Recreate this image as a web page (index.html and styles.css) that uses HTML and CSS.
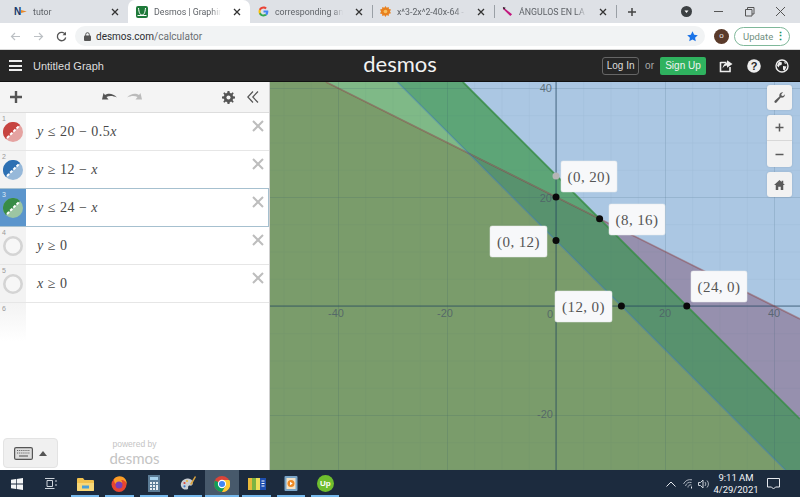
FILE: index.html
```html
<!DOCTYPE html>
<html lang="en">
<head>
<meta charset="utf-8">
<title>Desmos | Graphing Calculator</title>
<link rel="stylesheet" href="styles.css">
</head>
<body>
<div class="page">
  <div class="tabstrip">
    <div class="tab">
      <span class="fav nlogo">N<svg width="6" height="5" viewBox="0 0 6 5"><path d="M0 1 L6 2.500 L0 4z" fill="#e8892c"/></svg></span>
      <span class="tab-title">tutor</span><svg class="tab-x" viewBox="0 0 8 8"><path d="M1 1l6 6M7 1l-6 6"/></svg>
    </div>
    <div class="tab tab-active">
      <svg class="fav" width="12" height="12" viewBox="0 0 12 12"><rect width="12" height="12" rx="2" fill="#1f7a3a"/><path d="M2.500 2 C3 7 4 9 6 9 C8 9 9 7 9.500 2 M1.500 9.500 H10.500" stroke="#fff" stroke-width="1" fill="none"/></svg>
      <span class="tab-title">Desmos | Graphing C</span><svg class="tab-x" viewBox="0 0 8 8"><path d="M1 1l6 6M7 1l-6 6"/></svg>
    </div>
    <div class="tab tab-sep">
      <svg class="fav" width="11" height="11" viewBox="0 0 24 24"><path d="M22.500 12.300c0-.8-.1-1.500-.2-2.300H12v4.400h5.900c-.3 1.400-1 2.500-2.200 3.300l3.500 2.700c2.100-1.900 3.300-4.800 3.300-8.100z" fill="#4285f4"/><path d="M12 23c3 0 5.400-1 7.200-2.600l-3.500-2.700c-1 .7-2.200 1-3.700 1-2.800 0-5.200-1.900-6.100-4.500H2.300v2.800C4.100 20.600 7.800 23 12 23z" fill="#34a853"/><path d="M5.900 14.200c-.5-1.400-.5-3 0-4.400V7H2.300c-1.500 3-1.500 7 0 10z" fill="#fbbc05"/><path d="M12 5.400c1.600 0 3 .5 4.100 1.600l3.100-3.100C17.400 2.100 15 1 12 1 7.800 1 4.100 3.400 2.300 7l3.600 2.800C6.800 7.300 9.200 5.400 12 5.400z" fill="#ea4335"/></svg>
      <span class="tab-title">corresponding angle</span><svg class="tab-x" viewBox="0 0 8 8"><path d="M1 1l6 6M7 1l-6 6"/></svg>
    </div>
    <div class="tab tab-sep">
      <svg class="fav" width="11" height="11" viewBox="0 0 12 12"><path d="M6 0l1.300 2 2.200-1 .2 2.400 2.300.4-1.100 2.200 1.100 2-2.300.5-.2 2.400-2.200-1L6 12l-1.300-2-2.200 1-.2-2.400L0 8.100l1.100-2.100L0 3.800l2.300-.4.2-2.400 2.200 1z" fill="#e8801e"/><circle cx="6" cy="6" r="2" fill="#f8c060"/></svg>
      <span class="tab-title">x^3-2x^2-40x-64 - W</span><svg class="tab-x" viewBox="0 0 8 8"><path d="M1 1l6 6M7 1l-6 6"/></svg>
    </div>
    <div class="tab tab-sep">
      <svg class="fav" width="11" height="11" viewBox="0 0 12 12"><path d="M1 1 L11 9 L9 11 L1 3z" fill="#c2187e"/><path d="M1 1 L4 2 L2 4z" fill="#222"/></svg>
      <span class="tab-title">ÁNGULOS EN LA CIR</span><svg class="tab-x" viewBox="0 0 8 8"><path d="M1 1l6 6M7 1l-6 6"/></svg>
    </div>
    <div class="tab-new"><svg width="10" height="10" viewBox="0 0 10 10"><path d="M5 1v8M1 5h8" stroke="#444" stroke-width="1.500"/></svg></div>
    <div class="window-controls">
      <svg class="media" width="11" height="11" viewBox="0 0 11 11"><circle cx="5.500" cy="5.500" r="5.500" fill="#3c4043"/><path d="M3.500 4.500h4L5.500 7z" fill="#fff"/></svg>
      <svg width="11" height="11" viewBox="0 0 11 11"><path d="M1 5.500h9" stroke="#555"/></svg>
      <svg width="11" height="11" viewBox="0 0 11 11"><path d="M1.500 3.500h6.500v6.500h-6.500z M3.500 3.500v-2h6.500v6.500h-2" stroke="#555" fill="none"/></svg>
      <svg width="11" height="11" viewBox="0 0 11 11"><path d="M1 1l9 9M10 1l-9 9" stroke="#555"/></svg>
    </div>
  </div>

  <div class="addressbar">
    <svg class="nav-icon nav-back" width="11" height="11" viewBox="0 0 11 11"><path d="M10 5.500H1.500M5 2L1.500 5.500 5 9" stroke="#bcc0c4" stroke-width="1.200" fill="none"/></svg>
    <svg class="nav-icon" width="11" height="11" viewBox="0 0 11 11"><path d="M1 5.500h8.500M6 2l3.500 3.500L6 9" stroke="#bcc0c4" stroke-width="1.200" fill="none"/></svg>
    <svg class="nav-icon" width="11" height="11" viewBox="0 0 11 11"><path d="M9.300 3.500A4.200 4.200 0 1 0 9.700 6.500" stroke="#555" stroke-width="1.300" fill="none"/><path d="M10 .8v3.500H6.500z" fill="#555"/></svg>
    <div class="omnibox">
      <svg width="7" height="9" viewBox="0 0 7 9"><rect y="3.500" width="7" height="5.500" rx="1" fill="#555"/><path d="M1.700 4V2.500a1.800 1.800 0 0 1 3.600 0V4" stroke="#555" fill="none"/></svg>
      <span class="url"><span class="url-host">desmos.com</span>/calculator</span>
      <svg class="star" width="11" height="11" viewBox="0 0 12 12"><path d="M6 .3l1.800 3.700 4 .5-3 2.800.8 4L6 9.300 2.400 11.300l.8-4-3-2.800 4-.5z" fill="#1a73e8"/></svg>
    </div>
    <span class="avatar">o</span>
    <span class="update">Update<span class="update-dots">⋮</span></span>
  </div>

  <header class="appbar">
    <div class="appbar-left">
      <span class="hamburger"><i></i><i></i><i></i></span>
      <span class="graph-title">Untitled Graph</span>
    </div>
    <div class="logo">desmos</div>
    <div class="appbar-right">
      <span class="btn-login">Log In</span>
      <span class="or">or</span>
      <span class="btn-signup">Sign Up</span>
      <svg class="bar-icon" width="14" height="14" viewBox="0 0 14 14"><path d="M1.500 3.500h6M1.500 3v9.500h9.500V8" stroke="#eee" stroke-width="1.600" fill="none"/><path d="M8 1.200l5.500 3.800L8 8.800V6.500C6 6.500 4.500 7.500 3.500 9.500 3.700 6.500 5.500 4 8 3.700z" fill="#eee"/></svg>
      <svg class="bar-icon" width="14" height="14" viewBox="0 0 14 14"><circle cx="7" cy="7" r="6.800" fill="#eee"/><text x="7" y="10.800" class="q-mark">?</text></svg>
      <svg class="bar-icon" width="14" height="14" viewBox="0 0 14 14"><circle cx="7" cy="7" r="6" stroke="#eee" stroke-width="1.400" fill="none"/><path d="M4 2.500l3 1-.5 2.500-2 .5-1 2L2 6.500zM8 7l3.500.5L9.500 12 8 10.500z M9 2.500l2.500 1.500-1.500 1z" fill="#eee"/></svg>
    </div>
  </header>

  <main class="workspace">
    <aside class="panel">
      <div class="toolbar">
        <svg class="tool-plus" width="12" height="12" viewBox="0 0 12 12"><path d="M6 0v12M0 6h12" stroke="#555" stroke-width="2.400"/></svg>
        <div class="undo-redo">
          <svg width="15" height="10" viewBox="0 0 15 10"><path d="M0 7.500L1.500 1l1.500 2C6 1 11 1 15 5.500 11 3.500 7 3.500 4.500 5L6.500 7.500z" fill="#555"/></svg>
          <svg width="15" height="10" viewBox="0 0 15 10"><path d="M15 7.500L13.500 1 12 3C9 1 4 1 0 5.500 4 3.500 8 3.500 10.500 5L8.500 7.500z" fill="#bbb"/></svg>
        </div>
        <div class="tool-right">
          <svg width="13" height="13" viewBox="0 0 14 14"><path d="M6 0h2l.4 2 1.400.6L11.500 1.400l1.100 1.100-1.200 1.700.6 1.400 2 .4v2l-2 .4-.6 1.400 1.200 1.700-1.100 1.100-1.700-1.200-1.400.6L8 14H6l-.4-2-1.400-.6-1.700 1.200-1.100-1.100 1.200-1.700-.6-1.400L0 8V6l2-.4.600-1.400L1.400 2.500 2.500 1.400l1.700 1.200L5.600 2z" fill="#555"/><circle cx="7" cy="7" r="2.200" fill="#f5f5f5"/></svg>
          <svg width="12" height="12" viewBox="0 0 12 12"><path d="M6 .5L.8 6 6 11.500M11 .5L5.800 6 11 11.500" stroke="#555" stroke-width="1.200" fill="none"/></svg>
        </div>
      </div>

      <div class="expr-list">
        <div class="expr">
          <div class="gutter"><span class="num">1</span><svg class="swatch" viewBox="0 0 20 20"><circle cx="10" cy="10" r="10" fill="#e5a3a1"/><path d="M17.100 2.900A10 10 0 0 0 2.900 17.100z" fill="#c74440"/><path d="M4 16L16 4" stroke="#fff" stroke-width="2" stroke-dasharray="3 1.500"/></svg></div>
          <div class="math"><i>y</i> ≤ 20 − 0.5<i>x</i></div><svg class="del" viewBox="0 0 12 12"><path d="M1 1l10 10M11 1L1 11"/></svg>
        </div>
        <div class="expr">
          <div class="gutter"><span class="num">2</span><svg class="swatch" viewBox="0 0 20 20"><circle cx="10" cy="10" r="10" fill="#96b8d9"/><path d="M17.100 2.900A10 10 0 0 0 2.900 17.100z" fill="#2d70b3"/><path d="M4 16L16 4" stroke="#fff" stroke-width="2" stroke-dasharray="3 1.500"/></svg></div>
          <div class="math"><i>y</i> ≥ 12 − <i>x</i></div><svg class="del" viewBox="0 0 12 12"><path d="M1 1l10 10M11 1L1 11"/></svg>
        </div>
        <div class="expr expr-active">
          <div class="gutter"><span class="num">3</span><svg class="swatch" viewBox="0 0 20 20"><circle cx="10" cy="10" r="10" fill="#9cc6a3"/><path d="M17.100 2.900A10 10 0 0 0 2.900 17.100z" fill="#388c46"/><path d="M4 16L16 4" stroke="#fff" stroke-width="2" stroke-dasharray="3 1.500"/></svg></div>
          <div class="math"><i>y</i> ≤ 24 − <i>x</i></div><svg class="del" viewBox="0 0 12 12"><path d="M1 1l10 10M11 1L1 11"/></svg>
        </div>
        <div class="expr">
          <div class="gutter"><span class="num">4</span><svg class="swatch" viewBox="0 0 20 20"><circle cx="10" cy="10" r="8.700" fill="#f7f7f7" stroke="#d4d4d4" stroke-width="2.600"/></svg></div>
          <div class="math"><i>y</i> ≥ 0</div><svg class="del" viewBox="0 0 12 12"><path d="M1 1l10 10M11 1L1 11"/></svg>
        </div>
        <div class="expr">
          <div class="gutter"><span class="num">5</span><svg class="swatch" viewBox="0 0 20 20"><circle cx="10" cy="10" r="8.700" fill="#f7f7f7" stroke="#d4d4d4" stroke-width="2.600"/></svg></div>
          <div class="math"><i>x</i> ≥ 0</div><svg class="del" viewBox="0 0 12 12"><path d="M1 1l10 10M11 1L1 11"/></svg>
        </div>
        <div class="expr expr-empty">
          <div class="gutter"><span class="num">6</span></div>
        </div>
      </div>

      <div class="panel-footer">
        <div class="keyboard-btn">
          <svg width="19" height="13" viewBox="0 0 19 13"><rect x=".6" y=".6" width="17.800" height="11.800" rx="1.500" fill="#ddd" stroke="#555" stroke-width="1.200"/><path d="M3 3.500h13M3 6h13" stroke="#666" stroke-width="1.200" stroke-dasharray="1.200 .9"/><path d="M5 9h9" stroke="#666" stroke-width="1.200"/></svg>
          <svg width="8" height="5" viewBox="0 0 8 5"><path d="M0 5L4 0l4 5z" fill="#555"/></svg>
        </div>
        <div class="powered"><span class="powered-by">powered by</span><span class="powered-logo">desmos</span></div>
      </div>
    </aside>

    <section class="graph">
      <svg class="plot" viewBox="0 0 530 388" width="530" height="388">
        <defs>
          <pattern id="minor" x="13.500" y="6" width="27.250" height="27.250" patternUnits="userSpaceOnUse"><path d="M0 0V27.250M0 0H27.250" stroke="#234a66" stroke-opacity=".09" fill="none"/></pattern>
          <pattern id="major" x="68" y="6" width="109" height="109" patternUnits="userSpaceOnUse"><path d="M0 0V109M0 0H109" stroke="#234a66" stroke-opacity=".22" fill="none"/></pattern>
        </defs>
        <rect width="530" height="388" fill="#abc7e3"/>
        <polygon points="329.600,136.800 530,237 530,337.200" fill="#9690ae"/>
        <polygon points="127.400,0 192.800,0 329.600,136.800 198.800,71.400" fill="#5da577"/>
        <polygon points="56,0 127.400,0 198.800,71.400" fill="#7fb987"/>
        <polygon points="0,0 56,0 198.800,71.400 515.400,388 0,388" fill="#7a9c6b"/>
        <polygon points="198.800,71.400 329.600,136.800 530,337.200 530,388 515.400,388" fill="#58926e"/>
        <rect width="530" height="388" fill="url(#minor)"/>
        <rect width="530" height="388" fill="url(#major)"/>
        <path d="M286 0V388M0 224H530" stroke="#21415c" stroke-opacity=".65" fill="none"/>
        <path d="M56 0L530 237" stroke="#8a3a3a" stroke-opacity=".45" stroke-width="1.600" fill="none"/>
        <path d="M127.400 0L515.400 388" stroke="#2d70b3" stroke-opacity=".4" stroke-width="1.600" fill="none"/>
        <path d="M192.800 0L530 337.200" stroke="#388c46" stroke-opacity=".85" stroke-width="1.800" fill="none"/>
        <g class="ticks">
          <text x="66" y="235">-40</text><text x="175" y="235">-20</text><text x="280" y="236">0</text><text x="395" y="235">20</text><text x="504" y="235">40</text>
          <text x="282" y="10" class="tick-end">40</text><text x="282" y="120" class="tick-end">20</text><text x="283" y="336" class="tick-end">-20</text>
        </g>
        <circle cx="286" cy="94" r="3.500" fill="#b5b5b5"/>
        <g fill="#0a0a0a">
          <circle cx="286" cy="115" r="3.500"/><circle cx="329.600" cy="136.800" r="3.500"/><circle cx="286" cy="158.600" r="3.500"/><circle cx="351.400" cy="224" r="3.500"/><circle cx="416.800" cy="224" r="3.500"/>
        </g>
        <g class="pt-label">
          <rect x="291" y="79" width="56" height="31" rx="2"/><text x="319" y="100">(0, 20)</text>
          <rect x="339" y="122" width="56" height="31" rx="2"/><text x="367" y="143">(8, 16)</text>
          <rect x="220" y="144" width="57" height="31" rx="2"/><text x="248.500" y="165">(0, 12)</text>
          <rect x="285" y="209" width="57" height="31" rx="2"/><text x="313.500" y="230">(12, 0)</text>
          <rect x="421" y="189" width="56" height="31" rx="2"/><text x="449" y="210">(24, 0)</text>
        </g>
      </svg>
      <div class="graph-tools">
        <div class="gt-btn"><svg width="11" height="11" viewBox="0 0 13 13"><path d="M12.800 3.200c0 2-1.600 3.600-3.600 3.600-.4 0-.8-.1-1.200-.2L3 12.500c-.6.600-1.500.6-2.100 0s-.6-1.500 0-2.100L6.400 5.200C6.100 3.800 6.400 2 8 .8c.8-.5 1.800-.7 2.800-.5L8.600 2.600l.5 1.700 1.700.5L13 2.600z" fill="#5a5a5a"/></svg></div>
        <div class="gt-zoom">
          <div class="gt-cell"><svg width="9" height="9" viewBox="0 0 9 9"><path d="M4.500 .5v8M.5 4.500h8" stroke="#5a5a5a" stroke-width="1.500"/></svg></div>
          <div class="gt-cell gt-cell-last"><svg width="9" height="9" viewBox="0 0 9 9"><path d="M.5 4.500h8" stroke="#5a5a5a" stroke-width="1.500"/></svg></div>
        </div>
        <div class="gt-btn"><svg width="11" height="10" viewBox="0 0 13 12"><path d="M6.500 0L9 2.300V1h2v3.200L13 6h-2v6H8V8H5v4H2V6H0z" fill="#5a5a5a"/></svg></div>
      </div>
    </section>
  </main>

  <footer class="taskbar">
    <svg class="tb-start" width="12" height="12" viewBox="0 0 12 12"><path d="M0 1.800L5 1v4.600H0zM5.700 .9L12 0v5.600H5.700zM0 6.400h5V11L0 10.200zM5.700 6.400H12V12l-6.300-.9z" fill="#f4f6f8"/></svg>
    <svg class="tb-view" width="13" height="11" viewBox="0 0 13 11"><path d="M3 2.500h5.500v6H3zM1 .5h9.500M1 10.500h9.500" stroke="#cdd3da" fill="none"/><path d="M12 2v2M12 6v2" stroke="#cdd3da"/></svg>
    <div class="tb-apps">
      <div class="app"><svg width="17" height="14" viewBox="0 0 17 14"><path d="M0 2a1 1 0 0 1 1-1h5l1.500 2H16a1 1 0 0 1 1 1v9a1 1 0 0 1-1 1H1a1 1 0 0 1-1-1z" fill="#f1c14e"/><path d="M0 6h17v7a1 1 0 0 1-1 1H1a1 1 0 0 1-1-1z" fill="#f8d776"/><rect x="5" y="8.500" width="7" height="3" fill="#4a9fd8"/></svg></div>
      <div class="app"><svg width="16" height="16" viewBox="0 0 16 16"><circle cx="8" cy="8.500" r="7.500" fill="#e8452f"/><path d="M3 3C5 0 9-.5 12 1c2.500 1.500 4 4 3.800 7.500C15 5 12.500 3.500 10 4 11 5 11.500 6 11 7 9 5.500 6 5.500 4.500 8 3 6 3 4.500 3 3z" fill="#fb9d26"/><circle cx="8" cy="9" r="3.500" fill="#7a3fb8"/></svg></div>
      <div class="app"><svg width="12" height="17" viewBox="0 0 12 17"><rect width="12" height="17" fill="#5b7c96"/><rect x="2" y="2" width="8" height="3" fill="#a9d4ee"/><path d="M2 7h2v2H2zM5 7h2v2H5zM8 7h2v2H8zM2 10h2v2H2zM5 10h2v2H5zM8 10h2v5H8zM2 13h2v2H2zM5 13h2v2H5z" fill="#e8eef2"/></svg></div>
      <div class="app"><svg width="16" height="15" viewBox="0 0 16 15"><path d="M1 10C0 6 4 2 8 2.500c4 .5 5.500 3 4.500 6-1 2-3 .5-4 1.500s.5 3-1.500 3.500C4.500 14 2 13 1 10z" fill="#c9ced2"/><circle cx="4.500" cy="7" r="1.100" fill="#d9443a"/><circle cx="7" cy="5" r="1.100" fill="#e8b93a"/><circle cx="4.500" cy="10.300" r="1.100" fill="#3a78c9"/><path d="M15 0L10 8l1.500 1L16 1z" fill="#d9a441"/></svg></div>
      <div class="app app-active"><svg width="16" height="16" viewBox="0 0 16 16"><circle cx="8" cy="8" r="8" fill="#db4437"/><path d="M8 8L1 4.500A8 8 0 0 0 8 16l3.500-6z" fill="#0f9d58"/><path d="M8 4h7.300A8 8 0 0 1 8 16l3.500-6z" fill="#fcc934"/><circle cx="8" cy="8" r="3.600" fill="#4285f4" stroke="#fff" stroke-width="1.100"/></svg></div>
      <div class="app"><svg width="18" height="14" viewBox="0 0 18 14"><path d="M0 1h4v12H0z" fill="#e8b93a"/><path d="M4 1h4v12H4z" fill="#7cb342"/><path d="M8 1h4v12H8z" fill="#f0e05a"/><path d="M12 1h6v12h-6z" fill="#1e4fb0"/><path d="M13.500 4h3M13.500 6.500h3M13.500 9h3" stroke="#fff"/></svg></div>
      <div class="app"><svg width="14" height="15" viewBox="0 0 14 15"><rect x=".5" width="13" height="15" rx="1" fill="#7ba6c9"/><rect x="2.500" y="2" width="9" height="11" fill="#f6e3c5"/><circle cx="7" cy="7.500" r="3.500" fill="#ef8a24"/><path d="M6 5.700l2.700 1.800L6 9.300z" fill="#fff"/></svg></div>
      <div class="app"><span class="up-badge">Up</span></div>
    </div>
    <div class="tray">
      <svg width="10" height="6" viewBox="0 0 10 6"><path d="M.5 5.500L5 1l4.500 4.500" stroke="#e6e9ee" fill="none"/></svg>
      <svg class="tray-wifi" width="10" height="10" viewBox="0 0 10 10"><path d="M.5 5A8 8 0 0 1 9 .8M2.500 7A5.200 5.200 0 0 1 8.500 3.500M5 8.500A2.500 2.500 0 0 1 8.500 6" stroke="#aab2bc" fill="none"/><path d="M8.500 7.500v2" stroke="#e6e9ee"/></svg>
      <svg class="tray-vol" width="12" height="10" viewBox="0 0 12 10"><path d="M.5 3.500h2L5 1v8L2.500 6.500h-2z" stroke="#cdd3da" fill="none"/><path d="M7 3a3 3 0 0 1 0 4M9 1.500a5 5 0 0 1 0 7" stroke="#aab2bc" fill="none"/></svg>
      <div class="clock"><span>9:11 AM</span><span>4/29/2021</span></div>
      <svg class="notif" width="13" height="12" viewBox="0 0 13 12"><path d="M.5.500h12v8.500H8.500L6.500 11 4.500 9h-4z" stroke="#e6e9ee" fill="none"/></svg>
    </div>
  </footer>
</div>
</body>
</html>
```
FILE: styles.css
```css
* { box-sizing: border-box; }
html, body { margin: 0; padding: 0; }
body { font-family: "Liberation Sans", Arial, sans-serif; overflow: hidden; }
.page { width: 800px; height: 497px; display: flex; flex-direction: column; overflow: hidden; filter: blur(.3px); }

/* Tab strip */
.tabstrip { height: 23px; background: #dee1e6; display: flex; align-items: stretch; flex: none; }
.tab { width: 122px; display: flex; align-items: center; gap: 6px; padding: 0 7px 0 8px; color: #5f6368; font: 8.800px Roboto, sans-serif; position: relative; }
.tab:first-child { width: 128px; padding-left: 14px; }
.tab-active { background: #fff; border-radius: 7px 7px 0 0; padding-left: 8px; }
.tab-sep + .tab-sep::before { content: ""; position: absolute; left: 0; top: 5px; height: 13px; border-left: 1px solid #9aa0a6; }
.fav { flex: none; }
.nlogo { display: inline-flex; align-items: center; width: 13px; font: bold 10px "Liberation Sans", sans-serif; color: #17396b; }
.tab-title { flex: 1; min-width: 0; white-space: nowrap; -webkit-mask-image: linear-gradient(to right, #000 78%, transparent 92%); mask-image: linear-gradient(to right, #000 78%, transparent 92%); }
.tab-x { width: 8px; height: 8px; flex: none; fill: none; stroke: #333; stroke-width: 1.300; margin-right: 2px; }
.tab-new { width: 30px; display: flex; align-items: center; justify-content: center; border-left: 1px solid #9aa0a6; margin: 5px 0; }
.window-controls { margin-left: auto; display: flex; align-items: center; gap: 20px; padding-right: 14px; }
.media { margin-right: 1px; }

/* Address bar */
.addressbar { height: 27px; background: #fff; display: flex; align-items: center; border-bottom: 1px solid #d8d8d8; padding: 0 9px 0 10px; flex: none; }
.nav-icon { margin-right: 12px; }
.omnibox { width: 630px; height: 20px; margin-left: -4px; background: #f1f3f4; border-radius: 10px; display: flex; align-items: center; padding: 0 7px 0 9px; gap: 5px; }
.url { font: 10px Roboto, sans-serif; color: #6a6e72; }
.url-host { color: #2b2d30; }
.star { margin-left: auto; }
.avatar { width: 15px; height: 15px; margin-left: 9px; border-radius: 50%; background: #5a3a2a; color: #eee; font: 8px/14px "Liberation Sans", sans-serif; text-align: center; flex: none; }
.update { margin-left: 5px; width: 56px; height: 19px; border: 1px solid #7fb89a; border-radius: 10px; font: 9.500px/17px Roboto, sans-serif; color: #6f8f80; padding-left: 8px; display: flex; justify-content: space-between; padding-right: 3px; }
.update-dots { color: #1e8e5a; font-weight: bold; font-size: 11px; }

/* Desmos bar */
.appbar { height: 32px; background: #262626; border-bottom: 1px solid #111; flex: none; display: grid; grid-template-columns: 1fr auto 1fr; align-items: center; color: #f0f0f0; }
.appbar-left { display: flex; align-items: center; padding-left: 9px; gap: 11px; }
.hamburger { width: 13px; display: flex; flex-direction: column; gap: 2.500px; }
.hamburger i { display: block; height: 2px; background: #eee; }
.graph-title { font-size: 11px; color: #ddd; }
.logo { font: 400 22px/30px Lato, sans-serif; color: #f2f2f2; margin-top: -3px; }
.appbar-right { display: flex; align-items: center; justify-content: flex-end; padding-right: 11px; }
.btn-login { width: 37px; height: 18px; border: 1px solid #666; border-radius: 3px; font-size: 10px; line-height: 16px; text-align: center; color: #ddd; }
.or { font-size: 10px; color: #aaa; margin: 0 6px; }
.btn-signup { width: 46px; height: 18px; background: #2fb25f; border-radius: 2px; font-size: 10px; line-height: 18px; text-align: center; color: #f2f2f2; }
.bar-icon { margin-left: 14px; }
.bar-icon:first-of-type { margin-left: 13px; }
.q-mark { font: bold 11px "Liberation Sans", sans-serif; fill: #262626; text-anchor: middle; }

/* Workspace */
.workspace { flex: 1; display: flex; min-height: 0; }
.panel { width: 270px; flex: none; background: #fff; display: flex; flex-direction: column; border-right: 1px solid #cfcfcf; }
.toolbar { height: 31px; background: #f4f4f4; border-bottom: 1px solid #ddd; display: flex; align-items: center; padding: 0 10px; flex: none; }
.undo-redo { display: flex; gap: 10px; margin-left: 80px; }
.tool-right { margin-left: auto; display: flex; align-items: center; gap: 12px; }
.expr-list { flex: none; }
.expr { height: 38px; display: flex; position: relative; border-bottom: 1px solid #e6e6e6; }
.gutter { width: 26px; background: #f3f3f3; position: relative; display: flex; align-items: center; justify-content: center; flex: none; }
.num { position: absolute; left: 2px; top: 2px; font-size: 7px; color: #9a9a9a; }
.swatch { width: 20px; height: 20px; }
.math { padding-left: 11px; align-self: center; font: 14px "Liberation Serif", serif; color: #484848; letter-spacing: .5px; }
.del { position: absolute; right: 5px; top: 7px; width: 12px; height: 12px; fill: none; stroke: #bdbdbd; stroke-width: 2; }
.expr-active { border: 1px solid #a6c0cf; border-left: 0; margin-top: -1px; height: 39px; }
.expr-active .gutter { background: #5b95cc; }
.expr-active .num { color: #dfeaf5; }
.expr-active .del { top: 7px; right: 4px; }
.expr-empty { border-bottom: 0; height: 38px; }
.expr-empty .gutter { background: linear-gradient(#f3f3f3, #fff); }
.panel-footer { margin-top: auto; height: 32px; display: flex; padding-left: 3px; position: relative; }
.keyboard-btn { width: 55px; height: 30px; background: #f0f0f0; border: 1px solid #e3e3e3; border-radius: 4px; display: flex; align-items: center; justify-content: center; gap: 6px; }
.powered { position: absolute; left: 107px; top: 1px; width: 55px; text-align: center; color: #c4c4c4; display: flex; flex-direction: column; align-items: center; }
.powered-by { font-size: 8.500px; line-height: 10px; }
.powered-logo { font: 400 15px/18px Lato, sans-serif; }

/* Graph */
.graph { flex: 1; position: relative; overflow: hidden; }
.plot { display: block; }
.ticks text { font: 11px "Liberation Sans", sans-serif; fill: #4f5f68; fill-opacity: .85; text-anchor: middle; }
.ticks .tick-end { text-anchor: end; }
.pt-label rect { fill: #f7f8fa; stroke: #e6e8ea; stroke-width: .5; }
.pt-label text { font: 15px "Liberation Serif", serif; fill: #555; text-anchor: middle; letter-spacing: .4px; }
.graph-tools { position: absolute; top: 3px; right: 8px; display: flex; flex-direction: column; gap: 5px; }
.gt-btn, .gt-zoom { width: 25px; background: #f2f2f2; border-radius: 3px; box-shadow: 0 0 2px rgba(0,0,0,.15); }
.gt-btn { height: 25px; display: flex; align-items: center; justify-content: center; }
.gt-cell { height: 26px; display: flex; align-items: center; justify-content: center; border-bottom: 1px solid #d8d8d8; }
.gt-cell-last { border-bottom: 0; }

/* Taskbar */
.taskbar { height: 27px; flex: none; background: #1c2b3e; display: flex; align-items: center; padding-left: 11px; position: relative; }
.tb-view { margin-left: 21px; }
.tb-apps { display: flex; margin-left: 11px; height: 100%; align-items: stretch; }
.app { width: 34.300px; display: flex; align-items: center; justify-content: center; position: relative; }
.app::after { content: ""; position: absolute; left: 3px; right: 3px; bottom: 0; height: 2px; background: #76b9ed; }
.app-active { background: #47596b; }
.app-active::after { left: 0; right: 0; }
.up-badge { width: 17px; height: 17px; border-radius: 50%; background: #6fbe2e; color: #fff; font: bold 8px/17px "Liberation Sans", sans-serif; text-align: center; }
.tray { margin-left: auto; display: flex; align-items: center; padding-right: 20px; color: #f2f4f7; }
.tray-wifi { margin-left: 7px; }
.tray-vol { margin-left: 5px; }
.clock { display: flex; flex-direction: column; align-items: center; font: 9.500px/12px Roboto, sans-serif; margin-left: 7px; width: 38px; }
.notif { margin-left: 12px; }
```
